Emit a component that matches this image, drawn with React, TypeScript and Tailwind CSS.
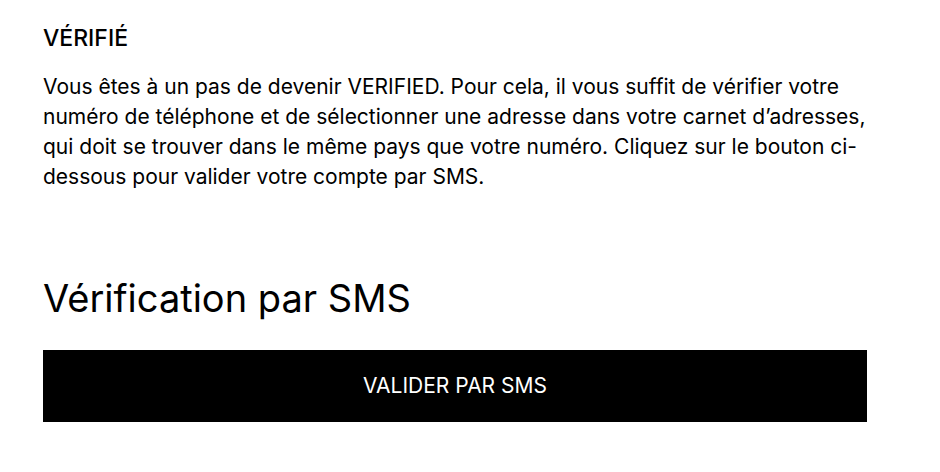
export default function App() {
  return (
    <div className="min-h-screen bg-white text-black" style={{ fontFamily: "Inter, 'Noto Sans', sans-serif" }}>
      <div className="ml-[43px] w-[824px] pt-[24px]">
        <h3 className="text-[23px] font-medium leading-[28px]">VÉRIFIÉ</h3>
        <p className="mt-[20px] text-[21px] leading-[30px]">
          Vous êtes à un pas de devenir VERIFIED. Pour cela, il vous suffit de vérifier votre numéro de
          téléphone et de sélectionner une adresse dans votre carnet d’adresses, qui doit se trouver dans le
          même pays que votre numéro. Cliquez sur le bouton ci-dessous pour valider votre compte par SMS.
        </p>
        <h2 className="mt-[83px] text-[38px] leading-[46px] font-normal">Vérification par SMS</h2>
        <button className="mt-[29px] flex h-[72px] w-full items-center justify-center bg-black text-[21px] text-white">
          VALIDER PAR SMS
        </button>
      </div>
    </div>
  );
}
